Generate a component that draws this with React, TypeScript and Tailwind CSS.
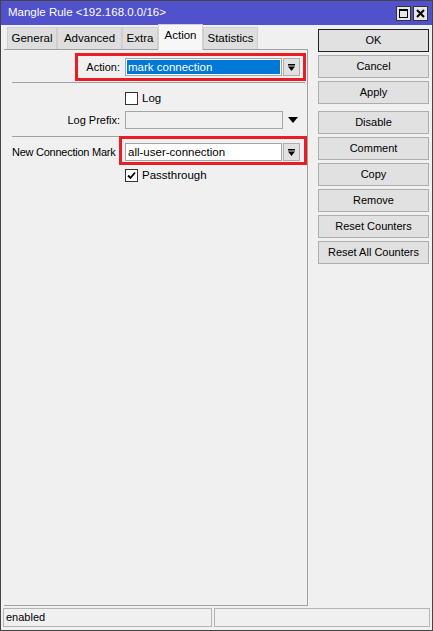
import React from 'react';

const font = { fontFamily: '"Liberation Sans", Arial, sans-serif' };

function DropArrow() {
  return (
    <svg width="9" height="9" viewBox="0 0 9 9">
      <rect x="1" y="1" width="7" height="1.5" fill="#000" />
      <polygon points="1,3.5 8,3.5 4.5,8" fill="#000" />
    </svg>
  );
}

function Checkbox({ checked }: { checked?: boolean }) {
  return (
    <div className="w-[13px] h-[13px] border border-[#333] bg-white flex items-center justify-center">
      {checked && (
        <svg width="9" height="9" viewBox="0 0 9 9">
          <polyline points="1,4.5 3.5,7 8,1.5" fill="none" stroke="#000" strokeWidth="1.8" />
        </svg>
      )}
    </div>
  );
}

function WinButton({ label, focused }: { label: string; focused?: boolean }) {
  return (
    <button
      className={
        'w-[111px] h-[23px] flex items-center justify-center text-[11px] text-black bg-[#e1e1e1] border ' +
        (focused ? 'border-[#222]' : 'border-[#adadad]')
      }
    >
      {label}
    </button>
  );
}

const tabs = ['General', 'Advanced', 'Extra', 'Action', 'Statistics'];
const tabWidths = [50, 65, 36, 45, 55];

export default function App() {
  return (
    <div className="w-[433px] h-[631px] flex flex-col bg-[#f0f0f0] border border-[#444] text-black text-[11px]" style={font}>
      {/* title bar */}
      <div className="h-[24px] bg-[#5151cb] flex items-center justify-between pl-[7px] pr-[4px] shrink-0">
        <span className="text-white text-[11.5px]">Mangle Rule &lt;192.168.0.0/16&gt;</span>
        <div className="flex gap-[2px]">
          <div className="w-[15px] h-[15px] bg-[#e6e6e6] border border-[#333] flex items-center justify-center">
            <div className="w-[9px] h-[9px] border border-black border-t-2" />
          </div>
          <div className="w-[15px] h-[15px] bg-[#e6e6e6] border border-[#333] flex items-center justify-center">
            <svg width="9" height="9" viewBox="0 0 9 9">
              <path d="M1 1 L8 8 M8 1 L1 8" stroke="#000" strokeWidth="2" />
            </svg>
          </div>
        </div>
      </div>

      <div className="flex flex-1">
        {/* left pane */}
        <div className="w-[307px] flex flex-col">
          <div className="h-[24px] flex items-end pl-[6px]">
            {tabs.map((t, i) =>
              t === 'Action' ? (
                <div
                  key={t}
                  style={{ width: tabWidths[i] }}
                  className="h-[26px] -mb-[1px] bg-[#f7f7f7] border border-[#d0d0d0] border-b-0 flex items-center justify-center text-[11.5px] relative z-10 pb-[3px]"
                >
                  {t}
                </div>
              ) : (
                <div
                  key={t}
                  style={{ width: tabWidths[i] }}
                  className="h-[22px] bg-[#dedede] border border-[#cfcfcf] border-b-0 flex items-center justify-center text-[11.5px]"
                >
                  {t}
                </div>
              )
            )}
          </div>

          <div className="flex-1 relative border-t border-r border-b border-[#a0a0a0] ml-[3px] pr-[2px]">
            {/* Action row */}
            <div className="flex items-center h-[18px] mt-[8px]">
              <div className="w-[117px] text-right pr-[1px]">Action:</div>
              <div className="ml-[4px] w-[157px] h-[18px] border border-[#a5a5a5] bg-white p-[1px]">
                <div className="h-full bg-[#0078d7] text-white text-[11.5px] leading-[14px] pl-[1px]">mark connection</div>
              </div>
              <div className="ml-[1px] w-[17px] h-[18px] bg-[#e1e1e1] border border-[#adadad] flex items-center justify-center">
                <DropArrow />
              </div>
            </div>

            <div className="h-px bg-[#a0a0a0] ml-[8px] mt-[6px]" />

            {/* Log */}
            <div className="flex items-center h-[13px] mt-[9px] ml-[121px] gap-[4px]">
              <Checkbox />
              <span className="text-[11.5px]">Log</span>
            </div>

            {/* Log Prefix */}
            <div className="flex items-center h-[18px] mt-[6px]">
              <div className="w-[117px] text-right pr-[1px]">Log Prefix:</div>
              <div className="ml-[4px] w-[158px] h-[18px] border border-[#a5a5a5] bg-[#f0f0f0]" />
              <div className="ml-[5px] flex items-center">
                <svg width="10" height="6" viewBox="0 0 10 6">
                  <polygon points="0,0 10,0 5,6" fill="#000" />
                </svg>
              </div>
            </div>

            <div className="h-px bg-[#a0a0a0] ml-[8px] mt-[7px]" />

            {/* New Connection Mark */}
            <div className="flex items-center h-[18px] mt-[6px]">
              <div className="w-[117px] pl-[8px] whitespace-nowrap tracking-[-0.25px]">New Connection Mark</div>
              <div className="ml-[4px] w-[157px] h-[18px] border border-[#a5a5a5] bg-white text-[11.5px] leading-[16px] pl-[2px]">
                all-user-connection
              </div>
              <div className="ml-[1px] w-[17px] h-[18px] bg-[#e1e1e1] border border-[#adadad] flex items-center justify-center">
                <DropArrow />
              </div>
            </div>

            {/* Passthrough */}
            <div className="flex items-center h-[13px] mt-[8px] ml-[121px] gap-[4px]">
              <Checkbox checked />
              <span className="text-[11.5px]">Passthrough</span>
            </div>

            {/* annotation boxes */}
            <div className="absolute left-[71px] top-[3px] w-[231px] h-[28px] border-[3px] border-[#ea1c24]" />
            <div className="absolute left-[115px] top-[86px] w-[188px] h-[29px] border-[3px] border-[#ea1c24]" />
          </div>
        </div>

        {/* right buttons */}
        <div className="flex flex-col pl-[10px] pt-[4px]">
          <div className="flex flex-col gap-[3px]">
            <WinButton label="OK" focused />
            <WinButton label="Cancel" />
            <WinButton label="Apply" />
          </div>
          <div className="flex flex-col gap-[3px] mt-[7px]">
            <WinButton label="Disable" />
            <WinButton label="Comment" />
            <WinButton label="Copy" />
            <WinButton label="Remove" />
            <WinButton label="Reset Counters" />
            <WinButton label="Reset All Counters" />
          </div>
        </div>
      </div>

      {/* status bar */}
      <div className="h-[24px] flex gap-[2px] px-[2px] pt-[2px] pb-[3px] shrink-0">
        <div className="w-[209px] border border-[#b5b5b5] leading-[17px] pl-[2px]">enabled</div>
        <div className="flex-1 border border-[#b5b5b5]" />
      </div>
    </div>
  );
}
